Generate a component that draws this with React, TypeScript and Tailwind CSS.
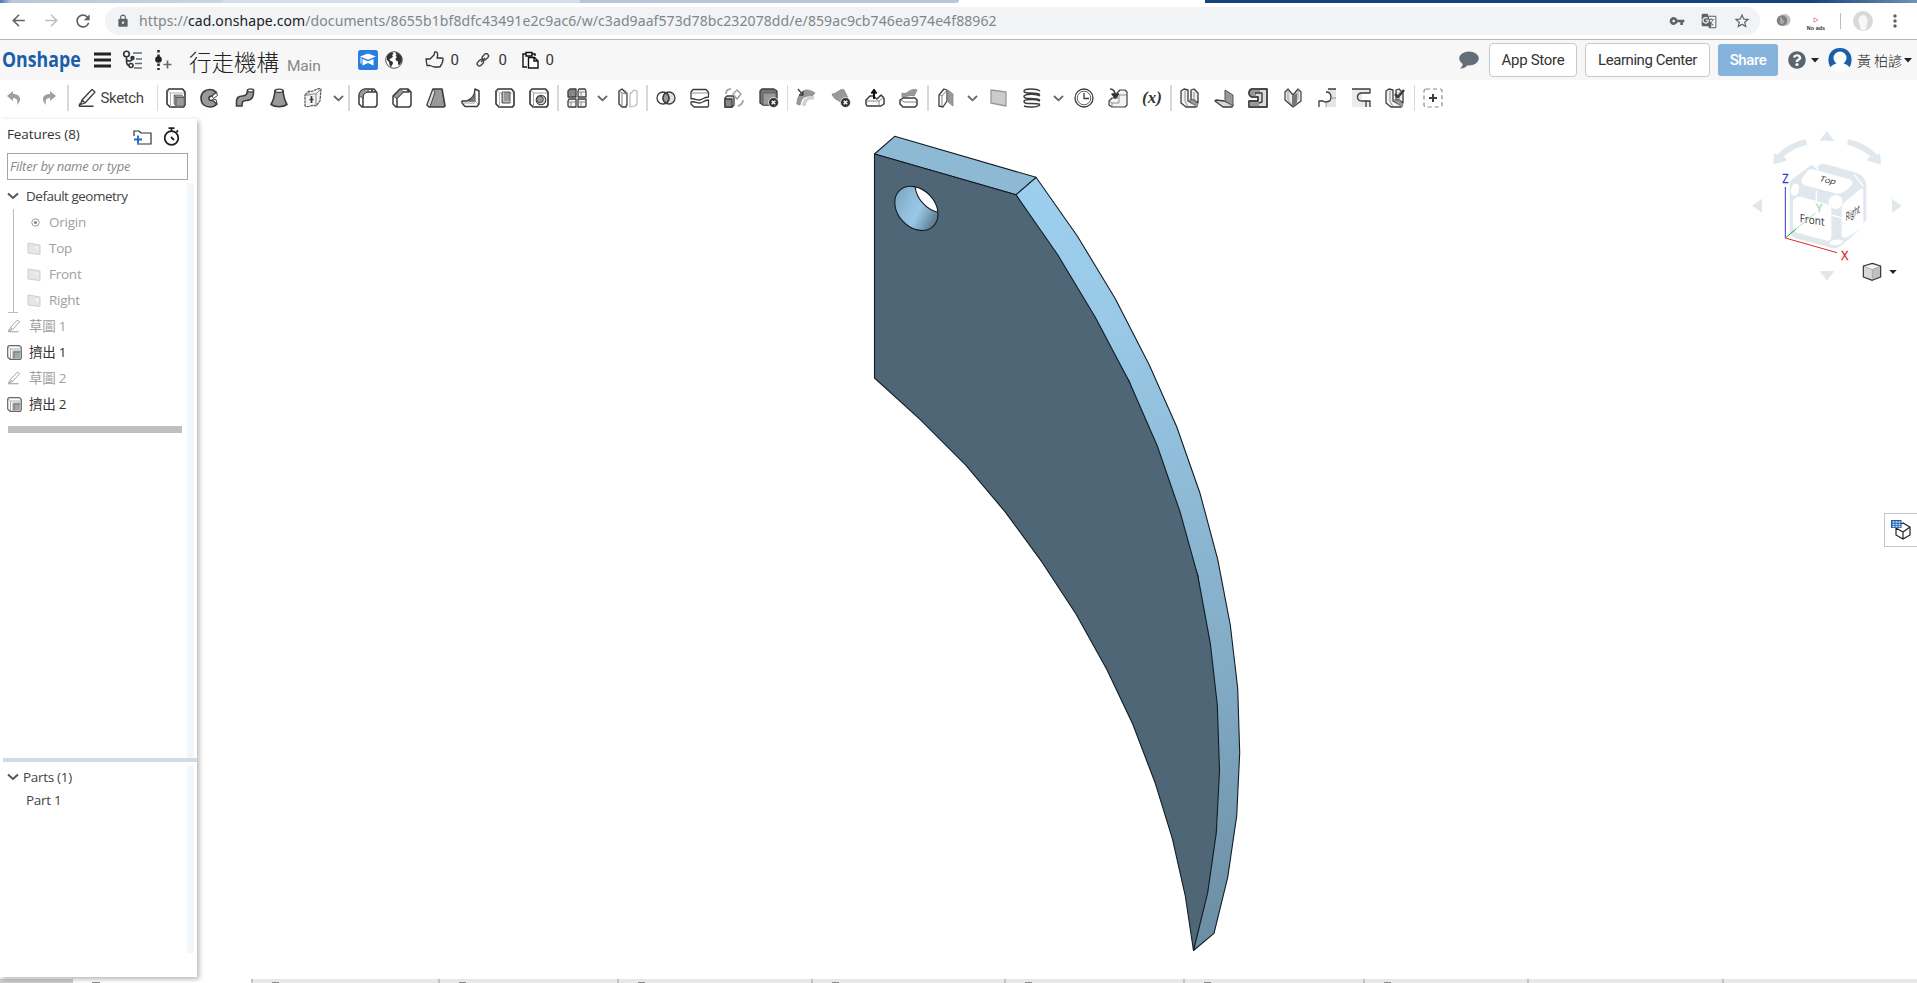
import React, { ReactNode } from "react";
import { MdArrowBack, MdArrowForward, MdRefresh, MdLock, MdVpnKey, MdGTranslate, MdStarBorder, MdMoreVert } from "react-icons/md";
import { FaQuestionCircle } from "react-icons/fa";

const G = "#999";
const L = "#d8d8d8";

function Ico({ children, size = 20 }: { children: ReactNode; size?: number }) {
  return (
    <svg width={size} height={size} viewBox="0 0 20 20" fill="none" stroke="#3c3c3c" strokeWidth="1.3" strokeLinejoin="round">
      {children}
    </svg>
  );
}

function Slot({ children }: { children: ReactNode }) {
  return <div className="flex w-[34.25px] shrink-0 items-center justify-center"><Ico>{children}</Ico></div>;
}

function Sep() {
  return <div className="flex w-[3.5px] shrink-0 justify-center"><div className="h-[26px] w-[1.5px] bg-[#d9d9d9]" /></div>;
}

function Chev() {
  return (
    <div className="flex w-[17px] shrink-0 items-center justify-center">
      <svg width="11" height="7" viewBox="0 0 11 7" fill="none" stroke="#666" strokeWidth="1.8"><path d="M1 1l4.5 4.3L10 1" /></svg>
    </div>
  );
}

const Caret = () => <svg width="8" height="5" viewBox="0 0 8 5"><path d="M0 0h8L4 4.6z" fill="#222" /></svg>;

const Block = () => <path d="M1 3l2-2h13.500L19 4v13l-1.500 2H4L1 16z" fill="#fff" stroke="#333" strokeWidth="1.600" />;

const ExtrudeShape = () => (
  <>
    <Block />
    <path d="M4.500 19V5l-3-2.500M4.500 5H18" stroke="#999" strokeWidth=".8" />
    <path d="M8 7h8l2 2v9h-8l-2-2z" fill={G} stroke="#777" strokeWidth=".8" />
    <path d="M10 18v-8.500h8M10 9.500L8 7" stroke="#555" strokeWidth=".9" />
  </>
);

const BentSheet = () => (
  <>
    <path d="M1 3l3-2 4 1v11l9 5-1 1H6l-5-4z" fill="#f2f2f2" />
    <path d="M11 2l3-1 4 4v10l-4-3h-3z" fill="#ececec" />
    <path d="M8 12h6l4 4-1 3z" fill={G} stroke="#777" strokeWidth=".8" />
    <path d="M5 3v10l3 6M11 2v10M14 4v8" stroke="#777" strokeWidth=".8" />
  </>
);

function CloseBadge() {
  return <><circle cx="14.500" cy="14.500" r="5" fill="#333" stroke="#fff" strokeWidth=".8" /><path d="M12.700 12.700l3.600 3.600M16.300 12.700l-3.600 3.600" stroke="#fff" strokeWidth="1.400" /></>;
}

const PencilShape = () => (
  <>
    <path d="M5 12L15 1.500l3 2.500L8 15l-4.500 1.500zM5 12l3 3" fill="#fff" />
    <path d="M2 18.300h14.500M2 18l1.500-3" strokeWidth="1.600" />
  </>
);

function ChromeBar() {
  return (
    <>
      <div className="flex h-[3px] w-full shrink-0">
        <div className="w-[223px] bg-gradient-to-r from-[#4e78ad] from-0% via-[#b9c7d8] via-5% to-[#c9d5e2]" />
        <div className="w-[357px] bg-[#d5dfea]" />
        <div className="w-[379px] rounded-br-[3px] bg-[#b6c5d8]" />
        <div className="w-[246px] bg-white" />
        <div className="grow bg-gradient-to-r from-[#14437d] from-85% to-[#7391b5]" />
      </div>
      <div className="flex h-[36px] w-full shrink-0 items-center bg-white pb-px text-[#5f6368]">
        <MdArrowBack className="ml-[9px] size-[19px]" />
        <MdArrowForward className="ml-[14px] size-[19px] text-[#bdbfc1]" />
        <MdRefresh className="ml-[12px] size-[20px]" />
        <div className="ml-[12px] flex h-[28px] w-[1655px] items-center rounded-full bg-[#f1f3f4]">
          <MdLock className="ml-[11px] size-[14px]" />
          <span className="ml-[9px] font-['Noto_Sans'] text-[14px] tracking-[0.095px] whitespace-nowrap text-[#80868b]">
            https://<span className="text-[#202124]">cad.onshape.com</span>/documents/8655b1bf8dfc43491e2c9ac6/w/c3ad9aaf573d78bc232078dd/e/859ac9cb746ea974e4f88962
          </span>
          <div className="mr-[9px] ml-auto flex items-center gap-[16px]">
            <MdVpnKey className="size-[16px]" />
            <MdGTranslate className="size-[16px]" />
            <MdStarBorder className="size-[18px]" />
          </div>
        </div>
        <svg className="ml-[16px]" width="15" height="15" viewBox="0 0 15 15">
          <ellipse cx="8.500" cy="7" rx="6" ry="6" fill="#bdbdbd" /><circle cx="6" cy="7.500" r="5.300" fill="#808080" />
          <path d="M5 4v6c3 1 4-3 0-3" stroke="#ccc" fill="none" strokeWidth="1" />
        </svg>
        <div className="ml-[15px] flex w-[20px] flex-col items-center gap-[2px] pt-[6px]">
          <svg width="6" height="6" viewBox="0 0 6 6"><path d="M1 .7v4.600L5 3z" fill="#fff" stroke="#e66" strokeWidth=".7" /></svg>
          <span className="font-['Liberation_Sans'] text-[5.5px] leading-[6px] font-bold whitespace-nowrap text-[#333]">No ads</span>
        </div>
        <div className="ml-[14px] h-[16px] w-px bg-[#bbb]" />
        <svg className="ml-[12px]" width="20" height="20" viewBox="0 0 20 20">
          <circle cx="10" cy="10" r="10" fill="#d9d9d9" /><path d="M5.500 9.500a4.500 5.500 0 019 0c0 3-1 4-1 8-2 2-5 2-6 1 .5-4-2-6-2-9z" fill="#f8f8f8" />
        </svg>
        <MdMoreVert className="ml-[12px] size-[20px]" />
      </div>
    </>
  );
}

function HeaderBar() {
  return (
    <header className="flex h-[41px] w-full shrink-0 items-center border-t border-[#b4b6b8] bg-[#f7f7f7]">
      <div className="ml-[2px] w-[81px] pb-[3px] whitespace-nowrap">
        <span className="inline-block origin-left scale-x-[0.865] font-['Open_Sans'] text-[20.5px] leading-[30px] font-bold text-[#1b5eaa]">Onshape</span>
      </div>
      <svg className="ml-[11px] shrink-0" width="17" height="16" viewBox="0 0 17 16"><path d="M0 2h17M0 8h17M0 14h17" stroke="#222" strokeWidth="2.800" /></svg>
      <svg className="ml-[11px]" width="21" height="20" viewBox="0 0 21 20" fill="none" stroke="#333" strokeWidth="1.600">
        <circle cx="4.500" cy="4" r="2.800" /><path d="M4.500 7v4c0 3 1 4.500 3 4.500M4.500 10c3 2 6 1 6-2" /><circle cx="9" cy="15.500" r="2" /><circle cx="10.500" cy="8" r="1.400" fill="#333" />
        <path d="M11 3h9M14 9h6M13 13.500h7M12 18h8" stroke="#5c6c7a" />
      </svg>
      <svg className="ml-[12px]" width="18" height="20" viewBox="0 0 18 20">
        <path d="M3.500 0v20" stroke="#333" strokeWidth="2.600" strokeDasharray="2.500 2" /><circle cx="3.500" cy="9.500" r="3.300" fill="#222" /><path d="M8.500 14.500h8M12.500 10.500v8" stroke="#5c6c7a" strokeWidth="1.700" />
      </svg>
      <div className="ml-[16px] flex items-baseline pt-[4px]">
        <span className="w-[90px] font-['Noto_Sans_CJK_TC'] text-[22.5px] leading-[30px] font-light whitespace-nowrap text-[#222]">行走機構</span>
        <span className="ml-[8px] font-['Roboto'] text-[15.5px] tracking-[-0.2px] text-[#888]">Main</span>
      </div>
      <div className="ml-[37px] flex w-[200px] items-center">
        <svg className="shrink-0" width="20" height="20" viewBox="0 0 20 20">
          <rect width="20" height="20" rx="2.500" fill="#2a7de1" /><path d="M10 3.500l8 3-8 3.300-8-3.300z" fill="#fff" /><path d="M4.500 9v6.500l5.500-2.500 5.500 2.500V9L10 11.300z" fill="#fff" /><path d="M3 7.500v6" stroke="#fff" strokeWidth="1" />
        </svg>
        <svg className="ml-[7px] shrink-0" width="18" height="18" viewBox="0 0 18 18">
          <circle cx="9" cy="9" r="8.300" fill="#fff" stroke="#555" strokeWidth="1" />
          <path d="M2 5C3 3 5 1.500 7.500 1.200L8.500 3 7 4l1 1.500-2 2-1.500.5.500 1.500 2.500 1 .5 2L6.500 15l-.5 1.500L4.500 14l-.5-3L2 9zM10 1.200c3 .3 5.500 2 6.700 4.800l.3 3-1 3-2 2.500-1-1.500v-2.500L11 9.500l-.5-2L12 6l-1.500-1 1-1.500z" fill="#333" />
        </svg>
        <svg className="ml-[22px] shrink-0" width="19" height="18" viewBox="0 0 19 18" fill="none" stroke="#333" strokeWidth="1.300" strokeLinejoin="round">
          <path d="M1 8h4l4-4 .8-3C12 .5 13 2 12.500 5L12 7h5c1.500 0 1.500 2 .5 2.500.5 1 .3 2-.6 2.300.2 1.200-.2 2-1.100 2.200 0 1.300-.8 2-1.800 2H9l-4-1.500H2z" />
        </svg>
        <Num n="0" className="ml-[7px]" />
        <svg className="ml-[17px] shrink-0" width="14" height="14" viewBox="0 0 14 14" fill="none" stroke="#444" strokeWidth="1.400">
          <rect x="6" y="1.500" width="7" height="4.500" rx="2.200" transform="rotate(-45 9.500 4)" /><rect x="1" y="7.500" width="7" height="4.500" rx="2.200" transform="rotate(-45 4.500 10)" /><path d="M5 9l4-4" />
        </svg>
        <Num n="0" className="ml-[9px]" />
        <svg className="ml-[15px] shrink-0" width="17" height="18" viewBox="0 0 17 18" fill="none" stroke="#111" strokeWidth="1.400">
          <path d="M5 16H1V3h3m6 0h3v2M4 1.500h6V5H4z" /><path d="M6.500 6.500h6l3.500 3.500v7H6.500zM12 6.500V10h4" fill="#fff" />
        </svg>
        <Num n="0" className="ml-[7px]" />
      </div>
      <svg className="ml-auto" width="20" height="18" viewBox="0 0 20 18"><ellipse cx="10" cy="7.500" rx="9.800" ry="7" fill="#626e78" /><path d="M4 10c0 4-1 6-3 7.500 4 0 7-2 9-5z" fill="#626e78" /></svg>
      <button className="ml-[10px] h-[34px] w-[88px] rounded-[4px] border border-[#c8c8c8] bg-white font-['Roboto'] text-[15px] tracking-[-0.3px] text-[#333]">App Store</button>
      <button className="ml-[8px] h-[34px] w-[125px] rounded-[4px] border border-[#c8c8c8] bg-white font-['Roboto'] text-[15px] tracking-[-0.45px] text-[#333]">Learning Center</button>
      <button className="ml-[8px] h-[32px] w-[60px] rounded-[3px] bg-[#85b3dc] font-['Roboto'] text-[15px] font-medium tracking-[-0.4px] text-white">Share</button>
      <FaQuestionCircle className="ml-[10px] size-[18px] text-[#5a646d]" />
      <div className="ml-[5px]"><Caret /></div>
      <svg className="ml-[9px]" width="24" height="24" viewBox="0 0 24 24">
        <path d="M3 20C-2 13 0 0 12 0s14 13 9 20z" fill="#1b5faa" /><circle cx="12" cy="10" r="6.500" fill="#fff" /><path d="M2 20c2-4 6-4 7-5h6c1 1 5 1 7 5-4 5-16 5-20 0z" fill="#fff" />
      </svg>
      <span className="ml-[5px] w-[45px] font-['Noto_Sans_CJK_TC'] text-[14px] leading-[20px] font-light whitespace-nowrap text-[#222]">黃 柏諺</span>
      <div className="mr-[5px] ml-[2px]"><Caret /></div>
    </header>
  );
}

function Num({ n, className }: { n: string; className: string }) {
  return <span className={`${className} w-[8px] shrink-0 font-['Roboto'] text-[15px] leading-[20px] text-[#333]`}>{n}</span>;
}

function Toolbar() {
  return (
    <nav className="flex h-[36px] w-full shrink-0 items-center bg-white">
      <div className="flex w-[66px] shrink-0 items-center gap-[21px] pl-[7px]">
        <svg width="14" height="14" viewBox="0 0 14 14"><path d="M6 0L0 5l6 5V7c4 0 5 2 4 7 5-5 4-11-4-11z" fill="#a0a0a0" /></svg>
        <svg width="14" height="14" viewBox="0 0 14 14"><path d="M8 0l6 5-6 5V7c-4 0-5 2-4 7-5-5-4-11 4-11z" fill="#a0a0a0" /></svg>
      </div>
      <Sep />
      <div className="flex w-[86px] shrink-0 items-center pl-[7px]">
        <Ico><PencilShape /></Ico>
        <span className="ml-[4px] font-['Roboto'] text-[15px] tracking-[-0.35px] text-[#444]">Sketch</span>
      </div>
      <Sep />
      <Slot><ExtrudeShape /></Slot>
      <Slot><path d="M16.500 4.500L13 2C7 0 1 4 1 10s4 9 9 9c3 0 5-1 7-3l-5-4c-1 1-3 .5-3-1.500S11 8 12 8z" fill={G} strokeWidth="1.600" /><path d="M12 8l4.500-3.500 1 3-4 3zM12 12l4-.5 1 4z" fill="#fff" strokeWidth="1" /></Slot>
      <Slot><path d="M1.500 18v-4.500c0-5 3-5.500 6-5.500 4 0 5-2 5-6h6c.5 6-1 10-7 10.500-4 .3-4.500 1-4.500 5.500z" fill={G} strokeWidth="1.600" /><ellipse cx="15.500" cy="2.500" rx="3" ry="1.600" fill="#fff" /></Slot>
      <Slot><path d="M6 2.500C5.500 9 4 13 2 16.500c4 3 12 3 16 0-2-3.500-3.500-7.500-4-14z" fill={G} strokeWidth="1.600" /><ellipse cx="10" cy="2.800" rx="4" ry="1.600" fill="#fff" /></Slot>
      <Slot><path d="M2 7l4-4c4 2 8-4 12-2l-1 12-4 5c-4-2-7 2-11 0z" fill="#f4f4f4" stroke="#555" strokeWidth="1.200" strokeDasharray="3 .6" /><path d="M2 7c4 1 8-2 11-1l5-5M13 6v12M6 3v3" stroke="#777" strokeWidth=".9" /><path d="M8.500 8v7M6.500 11.500h4" strokeWidth="1.700" /></Slot>
      <Chev /><Sep />
      <Slot><path d="M5 19V9c0-3 2-5 5-5h5l-2-3H8C4 1 1 4 1 8v8l3 3zM5 19h12.500l1.500-2V5l-3-4h-3M15 4h4" fill="#fff" strokeWidth="1.500" /><path d="M1 8c0-4 3-7 7-7h3L9.500 4.200C6 5 5 7 5 10z" fill={G} strokeWidth=".8" /></Slot>
      <Slot><path d="M5 19v-9l6-6h6l-2-3H8L1 8v8l3 3zM5 19h12.500l1.500-2V4l-3-3H8" fill="#fff" strokeWidth="1.500" /><path d="M1.500 8.500L8.500 1l3 3L5 10.500z" fill={G} strokeWidth=".8" /></Slot>
      <Slot><path d="M7 1h9l3 17-1 1H3l-2-2z" fill={G} strokeWidth="1.600" /><path d="M7 1l2 3-5 15-3-2z" fill="#ddd" strokeWidth=".9" /></Slot>
      <Slot><path d="M14 1l4 2v13l-2 2.500H4L1 15v-2h5c5-2 8-7 8-12z" fill="#fff" strokeWidth="1.500" /><path d="M14 6v7H8c3-1 5-3 6-7z" fill={G} stroke="#666" /><path d="M14 13l3 3M1 15h13" stroke="#888" strokeWidth=".8" /></Slot>
      <Slot><Block /><path d="M4.500 19V5l-3-2.500M4.500 5H18" stroke="#aaa" strokeWidth=".8" /><path d="M7 4h8v11H7z" fill={G} stroke="#555" strokeWidth="1" /><path d="M8.500 4v9.500H15" stroke="#ccc" strokeWidth=".8" /></Slot>
      <Slot><Block /><path d="M4.500 19V5l-3-2.500M4.500 5H18" stroke="#999" strokeWidth=".9" /><circle cx="12" cy="12" r="4.800" fill="#d8d8d8" strokeWidth="1.100" /><circle cx="11" cy="11.300" r="3.300" fill={G} strokeWidth=".9" /></Slot>
      <Sep />
      <Slot><path d="M1 3l2-2h6v8H1z" fill="#8c8c8c" /><path d="M11 3l1-2h6l1 2v6h-8zM1 13l1-2h7v8H2l-1-1zM11 11h8v7l-1 1h-7z" fill="#f6f6f6" /><path d="M3.500 9V4H9M11 4h8M1 14h8M11 14h8M4 14v5M14 14v5M14 4v5" stroke="#777" strokeWidth=".8" /></Slot>
      <Chev />
      <Slot><path d="M1 3l3-2 5 5v9l-1 4H4l-3-3z" fill="#fff" strokeWidth="1.400" /><path d="M4 5v14M1 3l3 2 5 1" stroke="#777" strokeWidth=".9" /><path d="M6 1l4 4v12l-1.500 2V6z" fill="#888" stroke="none" /><path d="M12 16V6l4-4 3 1v13l-2 2-5 1z" stroke="#b5b5b5" strokeWidth="1.100" /></Slot>
      <Sep />
      <Slot><circle cx="13" cy="10" r="6" fill="#e0e0e0" /><path d="M10 4.800a6 6 0 010 10.400 6 6 0 010-10.400z" fill={G} /><circle cx="7" cy="10" r="6" /></Slot>
      <Slot><path d="M1 4l2-2.500h13l2.500 3v4.500c-5 0-6 3-9 3-4 0-5-2-8.500-1z" fill="#fff" /><path d="M1.500 5H18" stroke="#777" strokeWidth=".8" /><path d="M1 14c4-1 5 1 8.500 1s4-3 9-3v6l-1 1H4l-3-3z" fill="#fff" /></Slot>
      <Slot><path d="M1 10l2-2h6l1 2v7l-2 2H1z" fill="#ddd" /><path d="M1 11h7v8H1z" fill="#888" /><path d="M2 6c0-3 2-5 5-5M14 18c3-1 5-3 5-6" stroke="#aaa" strokeWidth="2" /><path d="M13 2l4 4-4 5-4-5z" fill="#fff" stroke="#999" /></Slot>
      <Slot><path d="M1 3l2-2h12l3 2v14H4l-3-2z" fill="#777" /><path d="M4 5h13v12H4z" fill={G} stroke="#555" strokeWidth=".8" /><CloseBadge /></Slot>
      <Sep />
      <Slot><path d="M5 5c4-5 9-3 14 0l-3 3C8 7 5 11 4 17l-3-1c0-5 1-7 4-11z" fill={G} stroke="#888" strokeWidth=".9" /><path d="M8 18c0-6 4-9 10-8" stroke="#d0d0d0" strokeWidth="3.500" /><path d="M2 1l5 6M7 3v4H3" /></Slot>
      <Slot><path d="M1 6c5 0 8-6 12-4l4 8-6 7C8 10 4 14 1 6z" fill={G} stroke="#888" strokeWidth=".9" /><CloseBadge /></Slot>
      <Slot><path d="M1 12l4-4h3l4 3 4-4 3 3v6l-3 2H2l-1-2z" fill="#fff" strokeWidth="1.500" /><path d="M2 13h12l5-4M14 13v5" stroke="#777" strokeWidth=".9" /><path d="M9 11V5" stroke="#111" strokeWidth="2" /><path d="M6.500 5L9 1.500 11.500 5z" fill="#111" stroke="#111" /></Slot>
      <Slot><path d="M3 5c5 3 8-6 15-3l-3 6c-5-2-8 2-12 1z" fill={G} stroke="#888" strokeWidth=".9" /><path d="M1 12l3-2h12l2 2v5l-2 2H4l-3-3z" fill="#fff" strokeWidth="1.500" /><path d="M2 12l3 2h13" stroke="#777" strokeWidth=".9" /></Slot>
      <Sep />
      <Slot><path d="M2 7l5-6 3 1v11l-4 6-4-1z" fill="#fff" /><path d="M5 8l5-6M5 8v10M2 7l3 1" stroke="#777" strokeWidth=".9" /><path d="M11 2l5 4v12l-5-4z" fill={G} stroke="#888" strokeWidth=".8" /></Slot>
      <Chev />
      <Slot><path d="M3 2l15 2v14L3 15z" fill="#ccc" stroke="#999" /></Slot>
      <Slot><g strokeWidth="1.500"><path d="M18 3C14 0 2 .5 2 3s5 2 7 2c4 0 7 0 9 1.500M18 8C14 5 2 6 2 8.500s5 2 7 2c4 0 7 0 9 1.500M18 13C14 11 2 11 2 13.500s5 2 7 2c4 0 7 0 9 1M2 18c3 1.500 13 1.500 16-1" /></g></Slot>
      <Chev />
      <Slot><circle cx="10" cy="10" r="9" /><circle cx="10" cy="10" r="6.800" strokeWidth=".8" /><path d="M10 5v5.500h5" /></Slot>
      <Slot><path d="M1 13l3-3h5V5l3-3h5l2 2v13l-2 2H4l-3-2z" fill="#f4f4f4" strokeWidth="1.200" /><path d="M1 13l3 2h7V7h8M11 7L9 5M4 15v4" stroke="#777" strokeWidth=".8" /><path d="M2 1c4 0 5 3 5 6" strokeWidth="1.600" /><path d="M4 6l3 4 3.500-4z" fill="#333" stroke="#333" /></Slot>
      <Slot><text x="0" y="15" textLength="20" fontFamily="Liberation Serif" fontSize="17" fontStyle="italic" fontWeight="700" fill="#333" stroke="none">(x)</text></Slot>
      <Sep />
      <Slot><BentSheet /></Slot>
      <Slot><path d="M10 13l-8-1-1 1 8 6h9l1-2z" fill={L} /><path d="M11 2l8 5v11l-8-5z" fill={G} stroke="#555" strokeWidth="1" /></Slot>
      <Slot><path d="M4 1h15v18H1v-6h9V9H4C0 8 0 2 4 1z" fill="#dcdcdc" /><path d="M4 1h8v4H8v4H4C0 8 0 2 4 1zM1 14h10v5H1z" fill={G} stroke="none" /><path d="M4 1h15v18H1v-6h9V9H4C0 8 0 2 4 1zM7 5h7v9l-3 1" strokeWidth="1.400" /></Slot>
      <Slot><path d="M2 4l3-3 5 6 5-6 3 3v9l-8 6-8-7z" fill="#e8e8e8" strokeWidth="1.200" /><path d="M9 8l5-3v10l-5 4z" fill="#777" stroke="none" /><path d="M5 1v11l4 5M15 1v11" stroke="#888" strokeWidth=".8" /></Slot>
      <Slot><path d="M11 1h8v18H9v-7h5z" fill="#e5e5e5" stroke="none" /><path d="M2 19v-6h4c1 0 0 1 3 1s5-2 5-5-2-5-5-5M11 1h8" /><path d="M9 14v5m5-9h5" stroke="#888" strokeWidth=".8" /></Slot>
      <Slot><path d="M1 1h18v4h-8v8h8v6H1z" fill="#ebebeb" stroke="none" /><path d="M1 1h18v4h-8c-6 0-6 8 0 8h8v6M15 13v6" /></Slot>
      <Slot><BentSheet /><path d="M10 6l3 3 6-7" strokeWidth="2.600" /></Slot>
      <Sep />
      <Slot><rect x="1" y="1" width="18" height="18" rx="2" stroke="#888" strokeWidth="1.200" strokeDasharray="4 3" /><path d="M6 10h8M10 6v8" strokeWidth="2" /></Slot>
    </nav>
  );
}

function TreeRow({ icon, text, dim, indent }: { icon: ReactNode; text: ReactNode; dim?: boolean; indent?: boolean }) {
  return (
    <div className={`flex h-[26px] items-center ${indent ? "pl-[26px]" : "pl-[6px]"}`}>
      <div className="flex w-[16px] justify-center">{icon}</div>
      <span className={`ml-[7px] font-['Open_Sans','Noto_Sans_CJK_TC',sans-serif] text-[13.5px] tracking-[-0.25px] whitespace-pre ${dim ? "text-[#a0a0a0]" : "text-[#333]"}`}>{text}</span>
    </div>
  );
}

const PlaneIcon = () => <svg width="14" height="13" viewBox="0 0 14 13"><path d="M1 1l12 2v9.500L1 11z" fill="#e6e6e6" stroke="#cecece" /><path d="M8 5.500h2.500V8" stroke="#f8f8f8" fill="none" /></svg>;
const SketchIcon = () => <div className="opacity-50"><Ico size={14}><PencilShape /></Ico></div>;
const PartIcon = () => (
  <svg width="15" height="15" viewBox="0 0 15 15" fill="none">
    <path d="M.7 2L2 .7h10.500L14.300 2.500v10.300l-1 1.500H3L.7 12z" fill="#fff" stroke="#666" strokeWidth="1.200" strokeLinejoin="round" />
    <path d="M3.500 14V4H14M3.500 4L1 2" stroke="#999" strokeWidth=".8" /><path d="M5.500 5.500h8v8h-8z" fill="#a5a5a5" /><path d="M7 13.500V7h6.500" stroke="#777" strokeWidth=".9" />
  </svg>
);
const Expand = () => <svg className="shrink-0" width="12" height="8" viewBox="0 0 12 8" fill="none" stroke="#555" strokeWidth="2"><path d="M1 1.500l5 4.500 5-4.500" /></svg>;

function Sidebar() {
  return (
    <aside className="flex h-[858px] w-[197px] shrink-0 flex-col bg-white shadow-[2px_2px_5px_rgba(0,0,0,0.3)]">
      <div className="flex h-[34px] shrink-0 items-start pl-[7px]">
        <span className="w-[126px] pt-[5px] font-['Open_Sans'] text-[13.5px] leading-[20px] tracking-[-0.1px] whitespace-nowrap text-[#333]">Features (8)</span>
        <svg className="mt-[11px]" width="19" height="16" viewBox="0 0 19 16" fill="none" stroke="#333" strokeWidth="1.200"><path d="M1 6V1h5l2 2h10v11H8M4 14h4" /><path d="M1 9.500h8M5 5.500v8" stroke="#1b6ec2" strokeWidth="1.900" /></svg>
        <svg className="mt-[8px] ml-[11px]" width="17" height="19" viewBox="0 0 17 19" fill="none" stroke="#222" strokeWidth="1.800"><circle cx="8.500" cy="11" r="6.800" /><path d="M8.500 4V1.500M5.500 1.200h6M13.500 5l1.500-1.500M8 10l3 3" /></svg>
      </div>
      <div className="ml-[7px] flex h-[27px] w-[181px] shrink-0 items-center border border-[#a6a6a6] pl-[2px] font-['Open_Sans'] text-[13px] tracking-[-0.22px] text-[#888] italic">Filter by name or type</div>
      <div className="mt-[3px] flex h-[575px] shrink-0">
        <div className="w-[187px]">
          <div className="flex h-[26px] items-center pl-[7px]">
            <Expand />
            <span className="ml-[7px] font-['Open_Sans'] text-[13.5px] tracking-[-0.5px] text-[#444]">Default geometry</span>
          </div>
          <div className="flex">
            <div className="flex w-0 shrink-0 flex-col">
              <div className="ml-[13px] h-[103px] w-px bg-[#bbb]" /><div className="ml-[8px] h-px w-[10px] bg-[#bbb]" />
            </div>
            <div>
              <TreeRow indent dim icon={<svg className="ml-[3px]" width="9" height="9" viewBox="0 0 9 9"><circle cx="4.500" cy="4.500" r="3.700" fill="none" stroke="#999" /><circle cx="4.500" cy="4.500" r="1.600" fill="#888" /></svg>} text="Origin" />
              <TreeRow indent dim icon={<PlaneIcon />} text="Top" />
              <TreeRow indent dim icon={<PlaneIcon />} text="Front" />
              <TreeRow indent dim icon={<PlaneIcon />} text="Right" />
            </div>
          </div>
          <TreeRow dim icon={<SketchIcon />} text="草圖 1" />
          <TreeRow icon={<PartIcon />} text="擠出 1" />
          <TreeRow dim icon={<SketchIcon />} text="草圖 2" />
          <TreeRow icon={<PartIcon />} text="擠出 2" />
          <div className="mt-[9px] ml-[8px] h-[7px] w-[174px] bg-[#bfbfbf]" />
        </div>
        <div className="h-full w-[7px] bg-[#f2f7fb]" />
      </div>
      <div className="ml-[3px] h-[4px] shrink-0 bg-[#cfdce6]" />
      <div className="mt-[4px] flex h-[187px] shrink-0">
        <div className="w-[187px] font-['Open_Sans'] text-[13.5px] tracking-[-0.3px] text-[#444]">
          <div className="flex h-[22px] items-center pl-[7px]"><Expand /><span className="ml-[4px]">Parts (1)</span></div>
          <div className="flex h-[24px] items-center pl-[26px]">Part 1</div>
        </div>
        <div className="h-full w-[7px] bg-[#f2f7fb]" />
      </div>
    </aside>
  );
}

const outer = "1036,177.300 1077.300,236 1115.300,298.700 1149.300,365 1176.700,426.700 1200,493.300 1217.700,559.300 1230.300,625 1237.700,688.300 1239.700,752.700 1236.700,816 1227.700,877.300 1214,933.300 1193.500,950.500";
const front = "874.500,154 1016,194.700 1057.700,254.700 1095.300,317.300 1129.300,381.700 1157.300,446 1180,511.700 1198,576.700 1210.300,643.300 1217.300,705 1219.500,770.700 1216.300,832.700 1207.700,892.700 1193.500,950.500 1185.300,896 1172.300,838.300 1155.300,783.300 1132.700,724 1106.700,669.300 1076,614 1041.700,561.700 1005,511.700 966,465.300 920,419.300 874.500,378";

function Model() {
  return (
    <svg className="ml-[663px] shrink-0" width="400" height="840" viewBox="860 119 400 840" stroke="#111c22" strokeWidth="1.100" strokeLinejoin="round">
      <defs>
        <linearGradient id="side" gradientUnits="userSpaceOnUse" x1="1040" y1="180" x2="1240" y2="940">
          <stop offset="0" stopColor="#9ccfee" /><stop offset=".2" stopColor="#99c9e7" /><stop offset=".45" stopColor="#8db9d5" /><stop offset=".7" stopColor="#80a8c2" /><stop offset="1" stopColor="#6b8da3" />
        </linearGradient>
        <linearGradient id="bore" x1="0" y1=".2" x2="1" y2=".75">
          <stop offset="0" stopColor="#759cb5" /><stop offset=".35" stopColor="#8fbcd9" /><stop offset=".55" stopColor="#99c9e8" /><stop offset=".7" stopColor="#7fa8c2" /><stop offset=".9" stopColor="#54707f" />
        </linearGradient>
        <clipPath id="hole"><ellipse cx="916.400" cy="208.400" rx="24.600" ry="18.700" transform="rotate(47 916.400 208.400)" /></clipPath>
      </defs>
      <polygon points={outer + " 1219,770 1198,576 1129,381 1016,194.700"} fill="url(#side)" />
      <polygon points="874.500,154 894.700,136.300 1036,177.300 1016,194.700" fill="#8db9d5" />
      <polygon points={front} fill="#4f6677" />
      <g clipPath="url(#hole)">
        <rect x="890" y="180" width="55" height="55" fill="url(#bore)" stroke="none" />
        <ellipse cx="936.700" cy="190.700" rx="24.600" ry="18.700" transform="rotate(47 936.700 190.700)" fill="#fff" />
      </g>
      <ellipse cx="916.400" cy="208.400" rx="24.600" ry="18.700" transform="rotate(47 916.400 208.400)" fill="none" />
    </svg>
  );
}

function ViewCube() {
  return (
    <svg className="absolute top-[-1px] right-0" width="197" height="180" viewBox="0 0 591 540">
      <g fill="#e0e8ee">
        <path d="M321 48l22 29h-44zM321 497l22-29h-44zM97 272l29-21v43zM545 272l-29-21v43z" />
        <path d="M257 73l5 16c-32 8-50 19-71 35l11 12-42 13 2-34 10 4c22-22 47-38 85-46zM385 73l-4 16c30 8 51 19 70 35l-11 12 43 13-3-34-9 4c-24-22-48-38-86-46z" />
        <path d="M270 153q8-5 15-1l6 7 5-8q8-6 24-3l88 25q28 8 31 38v104l-13 13 2 8-66 58q-14 8-27 5l-112-30q-12-6-14-20V206q1-9 8-13z" />
      </g>
      <g fill="#fff">
        <path d="M262 168q8-8 22-4l102 28q18 7 8 20l-22 18q-9 8-22 6l-95-25q-18-8-8-22zM230 247q5-4 12-2l80 22q11 5 12 16v82q-2 14-14 12l-92-25q-8-4-9-13v-78q1-10 11-14zM420 223q9-5 10 8v96q-1 10-9 15l-39 25q-16 5-17-8v-80q1-11 8-17z" />
        <circle cx="347" cy="261" r="21" /><ellipse cx="225" cy="224" rx="12" ry="19" transform="rotate(12 225 224)" /><ellipse cx="348" cy="382" rx="20" ry="8" transform="rotate(-8 348 382)" />
      </g>
      <path d="M289 227v30M334 300l31 9M280 151l16 14M402 178l28 36M424 332l14 6" stroke="#fff" strokeWidth="4" />
      <g fontFamily="Open Sans" fill="#333" stroke="none">
        <text transform="matrix(.97 .22 -.4 .75 296 198)" fontSize="29" textLength="50">Top</text>
        <text transform="matrix(.99 .15 0 1 239 321)" fontSize="34" textLength="75" lengthAdjust="spacingAndGlyphs">Front</text>
        <text transform="matrix(.84 -.52 0 1.100 377 319)" fontSize="32" textLength="51" lengthAdjust="spacingAndGlyphs">Right</text>
      </g>
      <g fill="none" strokeWidth="3"><path d="M196 216v153" stroke="#3338d8" /><path d="M196 369l155 44" stroke="#dd2a2a" /><path d="M196 369l32-27" stroke="#23a523" /><path d="M228 342l58-48" stroke="#b8dfb8" /></g>
      <g fontFamily="Open Sans" fontSize="39"><text x="187" y="204" fill="#3338d8" stroke="#3338d8" textLength="19" lengthAdjust="spacingAndGlyphs">Z</text><text x="364" y="435" fill="#dd2a2a" textLength="21" lengthAdjust="spacingAndGlyphs" stroke="#dd2a2a">X</text><text x="288" y="292" fontSize="35" fill="#a9dba9" stroke="#a9dba9" textLength="19" lengthAdjust="spacingAndGlyphs">Y</text></g>
      <g strokeWidth="3" strokeLinejoin="round"><path d="M430 453l27-8 25 8v33l-25 10-27-10z" fill="#d8d8d8" /><path d="M430 453l27 11 25-11-25-8z" fill="#f2f2f2" /><path d="M457 464l25-11v33l-25 10z" fill="#c0c0c0" /><path d="M430 453l27 11 25-11M457 464v30" fill="none" stroke="#999" strokeWidth="2" /><path d="M430 486v-33l27-8 25 8v33l-25 10z" fill="none" stroke="#333" strokeWidth="3.500" /></g>
      <path d="M508 465h22l-11 12z" fill="#222" />
    </svg>
  );
}

function BottomTabs() {
  const tabs = [187, 179, 194, 193, 179, 180, 164, 195, 194];
  return (
    <footer className="flex h-[4px] w-full shrink-0 overflow-hidden bg-[#e8e8e8]">
      <div className="w-[73px] shrink-0 bg-[#cdcdcd]" />
      <div className="flex w-[178px] shrink-0 items-end bg-white pl-[19px]"><div className="h-px w-[8px] bg-[#888]" /></div>
      {tabs.map((w, i) => (
        <div key={i} className="flex shrink-0 items-end border-l-2 border-[#c2c2c2] pl-[19px]" style={{ width: w }}>
          {i < 7 && <div className="h-px w-[7px] bg-[#888]" />}
        </div>
      ))}
    </footer>
  );
}

export default function App() {
  return (
    <div className="flex h-[983px] w-[1917px] flex-col overflow-hidden bg-white">
      <ChromeBar />
      <HeaderBar />
      <Toolbar />
      <main className="relative flex h-[863px] w-full shrink-0 items-start pt-[3px]">
        <Sidebar />
        <Model />
        <ViewCube />
        <button className="absolute top-[397px] right-0 flex h-[34px] w-[33px] items-center border border-r-0 border-[#c5c5c5] bg-white pb-[2px] pl-[6px]">
          <svg width="20" height="21" viewBox="0 0 20 21" fill="none" stroke="#222" strokeWidth="1.200"><path d="M5 9v7l7 4 7-4V8l-7-4-4 2M5 9l7 4 7-5M12 13v7" /><rect x="0" y="1" width="10.500" height="8" fill="#1b5faa" stroke="none" /><path d="M1.500 3h2m1 0h2m1 0h2M1.500 5.300h2m1 0h2m1 0h2M1.500 7.500h2m1 0h2m1 0h2" stroke="#d5e6f5" strokeWidth="1.300" /></svg>
        </button>
      </main>
      <BottomTabs />
    </div>
  );
}
